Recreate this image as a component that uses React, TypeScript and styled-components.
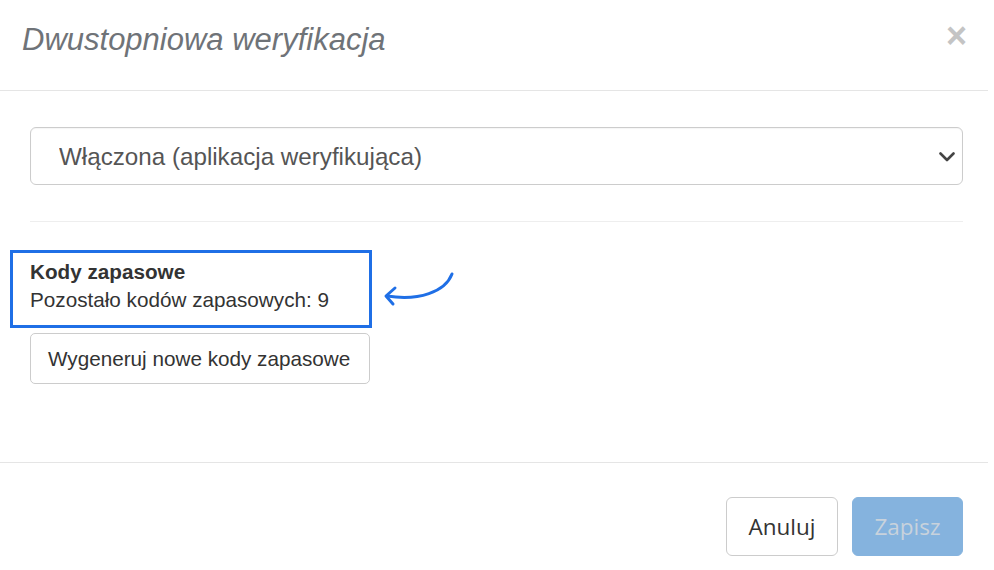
import React from 'react';
import styled, { createGlobalStyle } from 'styled-components';

const GlobalStyle = createGlobalStyle`
  html, body {
    margin: 0;
    padding: 0;
    background: #fff;
  }
  body {
    font-family: "Liberation Sans", Arial, sans-serif;
    color: #333;
  }
`;

const Modal = styled.div`
  width: 988px;
  background: #fff;
`;

const Header = styled.div`
  height: 91px;
  box-sizing: border-box;
  padding: 0 21px 10px 22px;
  display: flex;
  align-items: center;
  justify-content: space-between;
  border-bottom: 1px solid #e5e5e5;
`;

const Title = styled.h4`
  margin: 0;
  font-size: 31px;
  font-style: italic;
  font-weight: 400;
  color: #6f7378;
  line-height: 1.1;
`;

const Close = styled.button`
  border: none;
  background: none;
  padding: 0;
  margin-bottom: 8px;
  font-family: "Liberation Sans", Arial, sans-serif;
  font-size: 36px;
  font-weight: 700;
  line-height: 1;
  color: #c4c4c4;
  cursor: pointer;
`;

const Body = styled.div`
  padding: 36px 25px 78px 30px;
`;

const SelectWrap = styled.div`
  position: relative;
`;

const Select = styled.select`
  appearance: none;
  display: block;
  width: 100%;
  height: 58px;
  box-sizing: border-box;
  padding: 0 50px 0 28px;
  border: 1px solid #ccc;
  border-radius: 6px;
  background: #fff;
  font-family: "Liberation Sans", Arial, sans-serif;
  font-size: 24.2px;
  color: #555;
  box-shadow: inset 0 1px 1px rgba(0, 0, 0, 0.04);
  outline: none;
`;

const Chevron = styled.svg`
  position: absolute;
  right: 8px;
  top: 25px;
  pointer-events: none;
`;

const Divider = styled.hr`
  margin: 36px 0 28px;
  border: 0;
  border-top: 1px solid #eee;
`;

const Highlight = styled.div`
  position: relative;
  margin-left: -20px;
`;

const HighlightBox = styled.div`
  width: 362px;
  box-sizing: border-box;
  border: 3px solid #1f6fe6;
  padding: 5px 17px 11px;
  font-size: 20.7px;
  line-height: 28px;
  color: #333;
`;

const Label = styled.div`
  font-weight: 700;
`;

const Arrow = styled.svg`
  position: absolute;
  left: 373px;
  top: 20px;
`;

const GhostButton = styled.button`
  display: block;
  margin-top: 5px;
  width: 340px;
  height: 51px;
  box-sizing: border-box;
  padding: 0 0 0 17px;
  text-align: left;
  border: 1px solid #ccc;
  border-radius: 5px;
  background: #fff;
  font-family: "Liberation Sans", Arial, sans-serif;
  font-size: 20.7px;
  color: #333;
`;

const Footer = styled.div`
  border-top: 1px solid #e5e5e5;
  padding: 34px 25px 0 0;
  display: flex;
  justify-content: flex-end;
  gap: 14px;
`;

const FooterButton = styled.button<{ $primary?: boolean }>`
  height: 59px;
  width: ${(p) => (p.$primary ? '111px' : '112px')};
  box-sizing: border-box;
  border-radius: 6px;
  border: 1px solid ${(p) => (p.$primary ? '#85b3de' : '#ccc')};
  background: ${(p) => (p.$primary ? '#85b3de' : '#fff')};
  color: ${(p) => (p.$primary ? '#c8d2dc' : '#333')};
  font-family: "Open Sans", "Liberation Sans", sans-serif;
  font-size: 22.5px;
  padding: 0;
`;

export default function App() {
  return (
    <>
      <GlobalStyle />
      <Modal>
        <Header>
          <Title>Dwustopniowa weryfikacja</Title>
          <Close aria-label="Zamknij">×</Close>
        </Header>
        <Body>
          <SelectWrap>
            <Select defaultValue="app">
              <option value="off">Wyłączona</option>
              <option value="app">Włączona (aplikacja weryfikująca)</option>
            </Select>
            <Chevron width="16" height="10" viewBox="0 0 16 10">
              <path d="M1.5 1.5 L8 8 L14.5 1.5" fill="none" stroke="#444" strokeWidth="2.6" strokeLinecap="round" strokeLinejoin="round" />
            </Chevron>
          </SelectWrap>
          <Divider />
          <Highlight>
            <HighlightBox>
              <Label>Kody zapasowe</Label>
              <div>Pozostało kodów zapasowych: 9</div>
            </HighlightBox>
            <Arrow width="76" height="40" viewBox="0 0 76 40">
              <path d="M69 4 C 62 22, 36 31, 4 26" fill="none" stroke="#1f6fe6" strokeWidth="3" strokeLinecap="round" />
              <path d="M12 18 L3 26 L10 34" fill="none" stroke="#1f6fe6" strokeWidth="3" strokeLinecap="round" strokeLinejoin="round" />
            </Arrow>
          </Highlight>
          <GhostButton>Wygeneruj nowe kody zapasowe</GhostButton>
        </Body>
        <Footer>
          <FooterButton>Anuluj</FooterButton>
          <FooterButton $primary disabled>Zapisz</FooterButton>
        </Footer>
      </Modal>
    </>
  );
}
